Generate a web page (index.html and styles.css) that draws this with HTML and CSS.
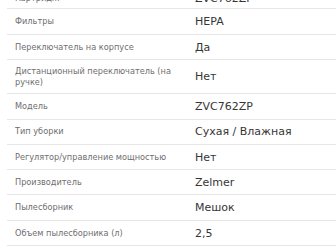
FILE: index.html
```html
<!DOCTYPE html>
<html lang="ru">
<head>
<meta charset="utf-8">
<link rel="stylesheet" href="styles.css">
</head>
<body>
<div class="specs">
  <div class="row"><div class="key">Картридж</div><div class="val">ZVC762ZP</div></div>
  <div class="row"><div class="key">Фильтры</div><div class="val">HEPA</div></div>
  <div class="row"><div class="key">Переключатель на корпусе</div><div class="val">Да</div></div>
  <div class="row"><div class="key">Дистанционный переключатель (на ручке)</div><div class="val">Нет</div></div>
  <div class="row"><div class="key">Модель</div><div class="val">ZVC762ZP</div></div>
  <div class="row"><div class="key">Тип уборки</div><div class="val">Сухая / Влажная</div></div>
  <div class="row"><div class="key">Регулятор/управление мощностью</div><div class="val">Нет</div></div>
  <div class="row"><div class="key">Производитель</div><div class="val">Zelmer</div></div>
  <div class="row"><div class="key">Пылесборник</div><div class="val">Мешок</div></div>
  <div class="row"><div class="key">Объем пылесборника (л)</div><div class="val">2,5</div></div>
  <div class="row"><div class="key">Цвет</div><div class="val">Нет</div></div>
</div>
</body>
</html>
```
FILE: styles.css
```css
html, body {
  margin: 0;
  padding: 0;
  background: #fff;
  overflow: hidden;
}
.specs {
  margin: -8px 0 0 7px;
}
.row {
  display: grid;
  grid-template-columns: 188px 1fr;
  align-items: center;
  border-top: 1px solid #e6e6e6;
  padding: 5.9px 0 5.4px;
}
.row:first-child {
  border-top: none;
  padding-top: 0;
  padding-bottom: 3.4px;
}
.key {
  padding-left: 8px;
  padding-right: 6px;
  font-family: "DejaVu Sans", sans-serif;
  font-size: 8.2px;
  line-height: 11px;
  color: #6e6e6e;
}
.val {
  font-family: "DejaVu Sans", sans-serif;
  font-size: 11px;
  line-height: 13px;
  color: #363636;
}
```
